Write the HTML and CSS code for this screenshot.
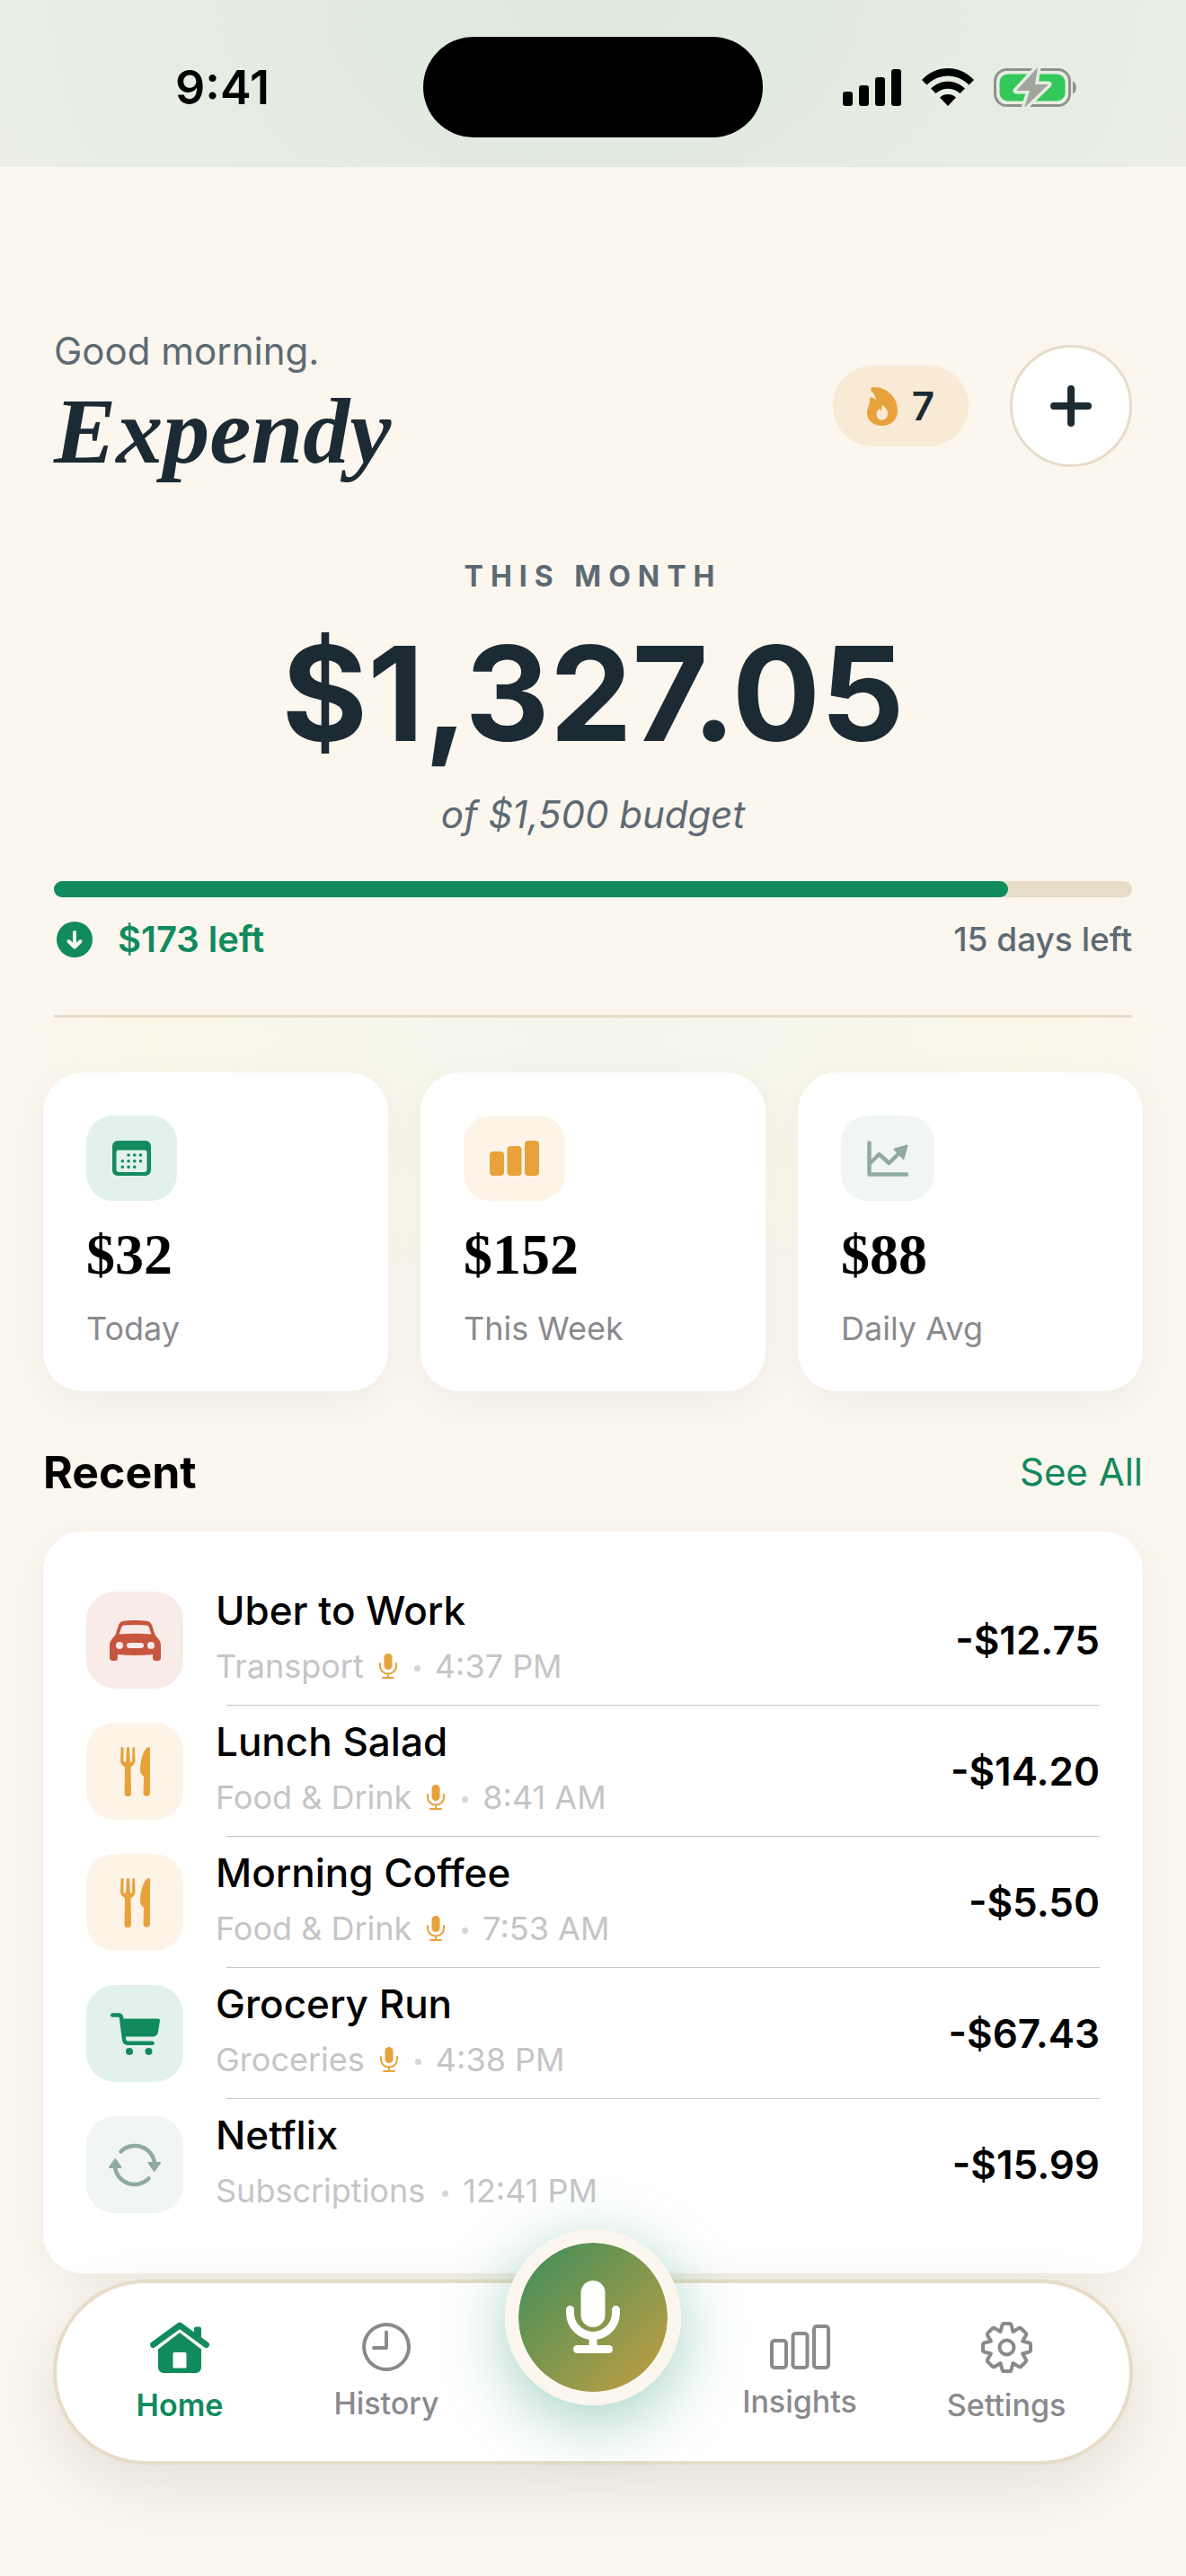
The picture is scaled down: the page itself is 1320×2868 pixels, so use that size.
FILE: index.html
```html
<!DOCTYPE html>
<html lang="en">
<head>
  <meta charset="utf-8">
  <meta name="viewport" content="width=device-width, initial-scale=1">
  <title>Expendy</title>
  <link rel="stylesheet" href="styles.css">
</head>
<body>

  <!-- shared icons -->
  <svg class="sprite" aria-hidden="true">
    <symbol id="mic-small" viewBox="0 0 20 28">
      <rect x="5.5" y="0" width="9" height="18" rx="4.5" fill="currentColor"/>
      <path d="M1 11v3a9 8.500 0 0 0 18 0v-3M10 23v4M4 27h12" fill="none" stroke="currentColor" stroke-width="2" stroke-linecap="round"/>
    </symbol>
    <symbol id="cutlery" viewBox="0 0 33 55">
      <path d="M1.500 0C.7 0 .5.600.5 1.500L0 15c0 3.500 2 5.500 5 7.500L4.500 51.500a3.500 3.500 0 0 0 7.500 0L11.500 22.500c3-2 5-4 5-7.500L16 1.500C16 .6 15.700 0 15 0s-1.400.600-1.500 1.500L13 16.500h-2L10 1.500C10 .5 9.500 0 8.500 0S7 .5 7 1.500L6 16.500H3.500L3.500 1.500C3.400.600 2.500 0 1.500 0z" fill="currentColor"/>
      <path d="M31 0c-5 2-9 14-9 26 0 3 1.500 4.500 4 7l-.5 18.500a3.800 3.800 0 0 0 7.500 0V2C33 .5 32.200-.4 31 0z" fill="currentColor"/>
    </symbol>
  </svg>

  <div class="status-bar">
    <span class="clock">9:41</span>
    <div class="island"></div>
    <div class="signals">
      <svg width="66" height="42" viewBox="0 0 66 42" aria-hidden="true">
        <rect x="0" y="26" width="11" height="16" rx="3"/>
        <rect x="18" y="19" width="11" height="23" rx="3"/>
        <rect x="36" y="10" width="11" height="32" rx="3"/>
        <rect x="54" y="1" width="11" height="41" rx="3"/>
      </svg>
      <svg width="58" height="42" viewBox="0 0 58 42" aria-hidden="true">
        <path d="M0 13C16-4.300 42-4.300 58 13l-5.500 5.500C39 5 19 5 5.500 18.500z"/>
        <path d="M10 22.500c11-10.500 27-10.500 38 0L42.500 28c-8-7-19-7-27 0z"/>
        <path d="M20 32.500c5-4.600 13-4.600 18 0L29 42z"/>
      </svg>
      <svg width="94" height="45" viewBox="0 0 94 45" aria-hidden="true">
        <rect x="1.500" y="2.500" width="83" height="40" rx="13" fill="none" stroke="#8d928b" stroke-width="3"/>
        <rect x="6.500" y="7.500" width="73" height="30" rx="9" fill="#34c759"/>
        <path d="M88 15.500c5 1.500 5 12.500 0 14z" fill="#8d928b"/>
        <path d="M49 0L25 26h15l-6 19L61 19H46z" fill="#a0a69e" stroke="#e6ede2" stroke-width="7" paint-order="stroke" stroke-linejoin="round"/>
      </svg>
    </div>
  </div>

  <header class="header">
    <div class="brand">
      <p class="greeting">Good morning.</p>
      <h1 class="title">Expendy</h1>
    </div>
    <div class="header-actions">
      <div class="streak">
        <svg width="34" height="43" viewBox="0 0 34 43" aria-hidden="true">
          <path fill-rule="evenodd" fill="#e7a23c" d="M7 0C22 0 34 11 34 26c0 10-7 17-17.500 17C7 43 0 37 0 29c0-6.500 3.500-9 3-16 0-2.500 4-1.500 7 1.500C9.500 9 7 7 5 4.500 3.500 2.500 4.500 0 7 0zM16.500 20c.3 2.500 0 4.500-1.200 6.500L13.500 24c-2 2-3 3.500-3 6 0 4 2.500 6.500 6 6.500s6.500-2.500 6.500-7c0-4-2.500-7.500-6.500-9.500z"/>
        </svg>
        <span>7</span>
      </div>
      <button class="add-button" type="button" aria-label="Add expense">
        <svg width="46" height="46" viewBox="0 0 46 46" aria-hidden="true">
          <path d="M23 4v38M4 23h38" stroke="currentColor" stroke-width="8" stroke-linecap="round"/>
        </svg>
      </button>
    </div>
  </header>

  <section class="budget">
    <h2 class="budget-label">THIS MONTH</h2>
    <p class="budget-amount">$1,327.05</p>
    <p class="budget-total">of $1,500 budget</p>
    <div class="progress"><div class="progress-fill" style="width: 88.5%"></div></div>
    <div class="budget-foot">
      <span class="left">
        <svg width="40" height="40" viewBox="0 0 40 40" aria-hidden="true">
          <circle cx="20" cy="20" r="20" fill="currentColor"/>
          <path d="M20 12v16M13.500 22l6.500 6.500 6.500-6.500" fill="none" stroke="#fbf6ee" stroke-width="4" stroke-linecap="round" stroke-linejoin="round"/>
        </svg>
        $173 left
      </span>
      <span class="days">15 days left</span>
    </div>
  </section>

  <section class="stats">
    <div class="card stat">
      <div class="tile green">
        <svg width="43" height="39" viewBox="0 0 43 39" aria-hidden="true">
          <path fill-rule="evenodd" d="M6 0h31a6 6 0 0 1 6 6v27a6 6 0 0 1-6 6H6a6 6 0 0 1-6-6V6a6 6 0 0 1 6-6zM6.500 10.500a2 2 0 0 0-2 2V32a3 3 0 0 0 3 3h28a3 3 0 0 0 3-3V12.500a2 2 0 0 0-2-2z" fill="currentColor"/>
          <path d="M18 16h.1M24.700 16h.1M31.400 16h.1M11.300 22.700h.1M18 22.700h.1M24.700 22.700h.1M31.400 22.700h.1M11.300 29.200h.1M18 29.200h.1M24.700 29.200h.1" stroke="currentColor" stroke-width="3.500" stroke-linecap="round"/>
        </svg>
      </div>
      <p class="stat-value">$32</p>
      <p class="stat-label">Today</p>
    </div>
    <div class="card stat">
      <div class="tile amber">
        <svg width="55" height="39" viewBox="0 0 55 39" fill="currentColor" aria-hidden="true">
          <rect x="0" y="12" width="16" height="27" rx="4"/>
          <rect x="19.500" y="6" width="16" height="33" rx="4"/>
          <rect x="39" y="0" width="16" height="39" rx="4"/>
        </svg>
      </div>
      <p class="stat-value">$152</p>
      <p class="stat-label">This Week</p>
    </div>
    <div class="card stat">
      <div class="tile sage">
        <svg width="46" height="40" viewBox="0 0 46 40" aria-hidden="true">
          <path d="M2.500 2.500v35H44M4 24.500l9.500-9.500L24.500 25 37 12.500" fill="none" stroke="currentColor" stroke-width="4.500" stroke-linecap="round" stroke-linejoin="round"/>
          <path d="M30.500 9.500L44.500 5.500l-4 14.500z" fill="currentColor" stroke="currentColor" stroke-width="2" stroke-linejoin="round"/>
        </svg>
      </div>
      <p class="stat-value">$88</p>
      <p class="stat-label">Daily Avg</p>
    </div>
  </section>

  <section class="recent">
    <div class="recent-head">
      <h2>Recent</h2>
      <a href="#all">See All</a>
    </div>
    <ul class="card list">
      <li class="row">
        <div class="row-icon red">
          <svg width="57" height="45" viewBox="0 0 57 45" aria-hidden="true">
            <path fill-rule="evenodd" fill="currentColor" d="M16 .8C23-.2 34-.2 41 .8c3 .4 5 1.700 6 4.500L50.500 16l4 5c1.800 2.300 2.500 4 2.500 7v13.500a3.500 3.500 0 0 1-3.500 3.500h-2a3.500 3.500 0 0 1-3.500-3.500V38c-13 1.200-26 1.200-39 0v3.500A3.500 3.500 0 0 1 5.500 45h-2A3.500 3.500 0 0 1 0 41.500V28c0-3 .7-4.700 2.500-7l4-5L10 5.300C11 2.500 13 1.200 16 .8zM16 5.500c-1.500.200-2.200.8-2.700 2L10.500 15.500c12-1 24-1 36 0L43.700 7.500c-.5-1.200-1.200-1.800-2.700-2-8-.7-17-.7-25 0zM11 24a4 4 0 1 0 0 8 4 4 0 0 0 0-8zM46 24a4 4 0 1 0 0 8 4 4 0 0 0 0-8zM22 25a3 3 0 0 0 0 6h13a3 3 0 0 0 0-6z"/>
          </svg>
        </div>
        <div class="row-body">
          <div class="row-text">
            <h3>Uber to Work</h3>
            <p>Transport <svg class="mic" width="20" height="28" aria-hidden="true"><use href="#mic-small"/></svg><i class="dot"></i>4:37 PM</p>
          </div>
          <span class="amount">-$12.75</span>
        </div>
      </li>
      <li class="row">
        <div class="row-icon amber"><svg width="33" height="55" aria-hidden="true"><use href="#cutlery"/></svg></div>
        <div class="row-body">
          <div class="row-text">
            <h3>Lunch Salad</h3>
            <p>Food &amp; Drink <svg class="mic" width="20" height="28" aria-hidden="true"><use href="#mic-small"/></svg><i class="dot"></i>8:41 AM</p>
          </div>
          <span class="amount">-$14.20</span>
        </div>
      </li>
      <li class="row">
        <div class="row-icon amber"><svg width="33" height="55" aria-hidden="true"><use href="#cutlery"/></svg></div>
        <div class="row-body">
          <div class="row-text">
            <h3>Morning Coffee</h3>
            <p>Food &amp; Drink <svg class="mic" width="20" height="28" aria-hidden="true"><use href="#mic-small"/></svg><i class="dot"></i>7:53 AM</p>
          </div>
          <span class="amount">-$5.50</span>
        </div>
      </li>
      <li class="row">
        <div class="row-icon green">
          <svg width="55" height="47" viewBox="0 0 55 47" aria-hidden="true">
            <path d="M2.200 2.500H9c1.800 0 2.700.8 3 2.500L15.200 30c.4 2.500 1.500 3.700 4 3.700H46.500" fill="none" stroke="currentColor" stroke-width="4.500" stroke-linecap="round"/>
            <path d="M11.500 6.500H52.500c2 0 2.700 1 2.400 2.800L53 21c-.6 3.600-2.500 5.500-6 5.500H15z" fill="currentColor"/>
            <circle cx="21" cy="43" r="4" fill="currentColor"/>
            <circle cx="42.500" cy="43" r="4" fill="currentColor"/>
          </svg>
        </div>
        <div class="row-body">
          <div class="row-text">
            <h3>Grocery Run</h3>
            <p>Groceries <svg class="mic" width="20" height="28" aria-hidden="true"><use href="#mic-small"/></svg><i class="dot"></i>4:38 PM</p>
          </div>
          <span class="amount">-$67.43</span>
        </div>
      </li>
      <li class="row">
        <div class="row-icon sage">
          <svg width="58" height="49" viewBox="0 0 58 49" aria-hidden="true">
            <path d="M13.500 9.500A22 22 0 0 1 51 22M44.500 39.500A22 22 0 0 1 7 27" fill="none" stroke="currentColor" stroke-width="4.500" stroke-linecap="round"/>
            <path d="M44.500 22H57l-6.300 9zM1 27h12.500L7.300 18z" fill="currentColor" stroke="currentColor" stroke-width="2" stroke-linejoin="round"/>
          </svg>
        </div>
        <div class="row-body">
          <div class="row-text">
            <h3>Netflix</h3>
            <p>Subscriptions<i class="dot"></i>12:41 PM</p>
          </div>
          <span class="amount">-$15.99</span>
        </div>
      </li>
    </ul>
  </section>

  <nav class="tab-bar">
    <a class="tab active" href="#home">
      <svg width="66" height="57" viewBox="0 0 66 57" aria-hidden="true">
        <path d="M3.500 25.500L33 4l29.500 21.500" fill="none" stroke="currentColor" stroke-width="7" stroke-linecap="round" stroke-linejoin="round"/>
        <path fill-rule="evenodd" fill="currentColor" d="M49 8a2.500 2.500 0 0 1 2.500-2.500h3A2.500 2.500 0 0 1 57 8v14l-8-6zM33 12l24 18.500V51a6 6 0 0 1-6 6H15a6 6 0 0 1-6-6V30.500zM27 34a1.500 1.500 0 0 0-1.500 1.500V50a1.500 1.500 0 0 0 1.500 1.500h12a1.500 1.500 0 0 0 1.500-1.500V35.500A1.500 1.500 0 0 0 39 34z"/>
      </svg>
      Home
    </a>
    <a class="tab" href="#history">
      <svg width="54" height="54" viewBox="0 0 54 54" aria-hidden="true">
        <path d="M27 2a25 25 0 1 0 .1 0zM27 10.500V28H13" fill="none" stroke="currentColor" stroke-width="4" stroke-linecap="round" stroke-linejoin="round"/>
      </svg>
      History
    </a>
    <button class="record" type="button" aria-label="Record expense">
      <svg width="60" height="82" viewBox="0 0 60 82" aria-hidden="true">
        <rect x="16.500" y="0" width="27" height="52" rx="13.500" fill="#fff"/>
        <path d="M4.500 32.500V36a25.500 25.500 0 0 0 51 0v-3.500M30 62v12" fill="none" stroke="#fff" stroke-width="9" stroke-linecap="round"/>
        <rect x="8" y="72" width="44" height="9" rx="4.500" fill="#fff"/>
      </svg>
    </button>
    <a class="tab" href="#insights">
      <svg width="67" height="50" viewBox="0 0 67 50" fill="none" stroke="currentColor" stroke-width="4" aria-hidden="true">
        <rect x="2" y="18" width="16" height="30" rx="3"/>
        <rect x="25.500" y="10" width="16" height="38" rx="3"/>
        <rect x="49" y="2" width="16" height="46" rx="3"/>
      </svg>
      Insights
    </a>
    <a class="tab" href="#settings">
      <svg width="57" height="57" viewBox="0 0 57 57" fill="none" stroke="currentColor" stroke-width="4" stroke-linejoin="round" aria-hidden="true">
        <path d="M25.500 2h6q1.500 0 2 1.500l2 7.400 6.600-3.800q1.300-.7 2.500.4l4.900 4.900q1.100 1.200.4 2.500L46.100 21.500l7.400 2q1.500.5 1.500 2v6q0 1.500-1.500 2l-7.400 2 3.800 6.600q.7 1.300-.4 2.500l-4.900 4.900q-1.200 1.100-2.500.4L35.500 46.100l-2 7.400q-.5 1.500-2 1.500h-6q-1.500 0-2-1.500l-2-7.400-6.600 3.800q-1.300.7-2.500-.4l-4.900-4.900q-1.100-1.200-.4-2.500l3.800-6.600-7.400-2q-1.500-.5-1.500-2v-6q0-1.500 1.500-2l7.400-2-3.800-6.600q-.7-1.300.4-2.500l4.900-4.900q1.200-1.100 2.500-.4l6.600 3.800 2-7.400q.5-1.500 2-1.500z"/>
        <circle cx="28.500" cy="28.500" r="8"/>
      </svg>
      Settings
    </a>
  </nav>

</body>
</html>
```

FILE: styles.css
```css
:root {
  --bg: #fbf6ee;
  --ink: #1c2a33;
  --slate: #5c6a74;
  --gray: #8a8a8e;
  --line: #e7dcc8;
  --green: #118a5e;
  --amber: #e7a23c;
}

* {
  box-sizing: border-box;
  margin: 0;
  padding: 0;
}

body {
  min-height: 100vh;
  background: var(--bg);
  font-family: Inter, "Liberation Sans", sans-serif;
  color: #000;
}

svg {
  display: block;
  flex: none;
}

a {
  text-decoration: none;
}

.sprite {
  display: none;
}

/* status bar */
.status-bar {
  display: grid;
  grid-template-columns: 1fr 378px 1fr;
  align-items: center;
  height: 186px;
  padding-top: 8px;
  background: radial-gradient(ellipse 60% 300% at 50% 0, #dde8dd, #edf0e6);
}

.clock {
  padding-left: 24px;
  text-align: center;
  font-size: 52px;
  font-weight: 600;
}

.island {
  height: 112px;
  border-radius: 56px;
  background: #000;
}

.signals {
  display: flex;
  align-items: center;
  justify-content: center;
  gap: 22px;
  padding-right: 32px;
}

/* header */
.header {
  display: flex;
  align-items: center;
  justify-content: space-between;
  padding: 180px 60px 0;
}

.greeting {
  margin-bottom: 10px;
  font-size: 42px;
  line-height: 50px;
  color: var(--slate);
}

.title {
  font-family: "Liberation Serif", serif;
  font-size: 104px;
  font-style: italic;
  line-height: 108px;
  color: var(--ink);
}

.header-actions {
  display: flex;
  align-items: center;
  gap: 46px;
  padding-top: 4px;
}

.streak {
  display: flex;
  align-items: center;
  gap: 16px;
  height: 90px;
  padding: 0 38px;
  border-radius: 45px;
  background: #f8ead4;
  font-size: 44px;
  font-weight: 600;
  color: var(--ink);
}

.add-button {
  display: flex;
  align-items: center;
  justify-content: center;
  width: 136px;
  height: 136px;
  border: 3px solid var(--line);
  border-radius: 50%;
  background: #fff;
  color: var(--ink);
}

/* monthly budget */
.budget {
  margin: 88px 60px 0;
  padding-bottom: 60px;
  border-bottom: 3px solid var(--line);
  text-align: center;
}

.budget-label {
  font-size: 32px;
  line-height: 40px;
  letter-spacing: 8px;
  color: var(--slate);
}

.budget-amount {
  margin: 30px 0;
  font-size: 146px;
  font-weight: 700;
  line-height: 160px;
  color: var(--ink);
}

.budget-total {
  font-size: 42px;
  font-style: italic;
  line-height: 50px;
  color: var(--slate);
}

.progress {
  height: 18px;
  margin: 49px 0 23px;
  border-radius: 9px;
  background: var(--line);
}

.progress-fill {
  height: 100%;
  border-radius: 9px;
  background: var(--green);
}

.budget-foot {
  display: flex;
  justify-content: space-between;
  line-height: 48px;
}

.left {
  display: flex;
  align-items: center;
  gap: 28px;
  padding-left: 3px;
  font-size: 40px;
  font-weight: 600;
  color: var(--green);
}

.days {
  font-size: 37px;
  font-weight: 500;
  color: var(--slate);
}

/* stat cards */
.card {
  border-radius: 44px;
  background: #fff;
  box-shadow: 0 12px 48px rgba(28, 42, 51, 0.05);
}

.stats {
  display: grid;
  grid-template-columns: repeat(3, 1fr);
  gap: 36px;
  padding: 61px 48px 0;
  background: radial-gradient(ellipse 50% 70% at 50% 0, #f3f4ec, #fbf8ea 75%, var(--bg));
}

.stat {
  padding: 48px;
}

.tile {
  display: flex;
  align-items: center;
  width: fit-content;
  height: 95px;
  padding: 0 29px;
  border-radius: 30px;
}

.green {
  background: #e2f1eb;
  color: var(--green);
}

.amber {
  background: #fdf4e7;
  color: var(--amber);
}

.sage {
  background: #f1f5f4;
  color: #8faaa0;
}

.red {
  background: #f9ebe8;
  color: #c8553d;
}

.stat-value {
  margin: 24px 0;
  font-family: "Liberation Serif", serif;
  font-size: 64px;
  font-weight: 700;
  line-height: 72px;
}

.stat-label {
  font-size: 36px;
  line-height: 44px;
  color: var(--gray);
}

/* recent list */
.recent {
  padding: 60px 48px 0;
}

.recent-head {
  display: flex;
  align-items: center;
  justify-content: space-between;
  margin-bottom: 36px;
  line-height: 60px;
}

.recent-head h2 {
  font-size: 50px;
}

.recent-head a {
  font-size: 42px;
  color: var(--green);
}

.list {
  padding: 48px;
  list-style: none;
}

.row {
  display: flex;
  align-items: center;
}

.row-icon {
  display: flex;
  flex: none;
  align-items: center;
  justify-content: center;
  width: 108px;
  height: 108px;
  border-radius: 32px;
}

.row-body {
  display: flex;
  flex: 1;
  align-items: center;
  justify-content: space-between;
  height: 146px;
  margin-left: 48px;
  border-bottom: 1px solid #c6c6c8;
}

.row:last-child .row-body {
  border-bottom: none;
}

.row-text {
  margin-left: -12px;
  padding-bottom: 10px;
}

.row h3 {
  margin-bottom: 8px;
  font-size: 44px;
  font-weight: 500;
  line-height: 60px;
}

.row p {
  display: flex;
  align-items: center;
  font-size: 36px;
  line-height: 48px;
  color: #c5c5c7;
}

.mic {
  margin-left: 17px;
  color: var(--amber);
}

.dot {
  width: 7px;
  height: 7px;
  margin: 6px 16px 0 19px;
  border-radius: 50%;
  background: #d6d6d8;
}

.amount {
  font-size: 44px;
  font-weight: 600;
}

/* tab bar */
.tab-bar {
  position: relative;
  display: grid;
  grid-template-columns: repeat(5, 1fr);
  height: 206px;
  margin: 7px 59px 0;
  padding: 0 22px;
  border: 4px solid var(--line);
  border-radius: 103px;
  background: #fff;
  box-shadow: 0 24px 72px rgba(28, 42, 51, 0.1);
}

.tab {
  display: flex;
  flex-direction: column;
  align-items: center;
  justify-content: center;
  gap: 16px;
  font-size: 34px;
  font-weight: 500;
  line-height: 40px;
  color: var(--gray);
}

.tab.active {
  font-weight: 600;
  color: var(--green);
}

.record {
  display: flex;
  align-items: center;
  justify-content: center;
  justify-self: center;
  width: 196px;
  height: 196px;
  margin-top: -60px;
  border: 15px solid var(--bg);
  border-radius: 50%;
  background: linear-gradient(135deg, #2f8d5d, #d2a03f) border-box;
  background-clip: padding-box;
  box-shadow: 0 18px 72px rgba(17, 138, 94, 0.38);
}
```
